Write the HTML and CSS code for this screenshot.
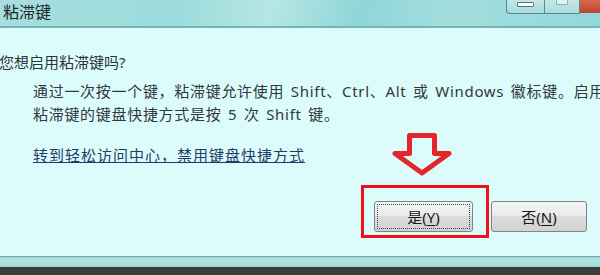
FILE: index.html
```html
<!DOCTYPE html>
<html lang="zh-CN">
<head>
    <meta charset="UTF-8">
    <title>粘滞键</title>
    <link rel="stylesheet" href="styles.css">
</head>
<body>

<div class="window">
    <div class="titlebar">
        <span class="title">粘滞键</span>
        <div class="caption-btns">
            <span class="cap cap-min"><i></i></span>
            <span class="cap cap-max"><i></i></span>
            <span class="cap cap-close"></span>
        </div>
    </div>

    <div class="content">
        <div class="question">您想启用粘滞键吗?</div>
        <p class="desc">通过一次按一个键，粘滞键允许使用 Shift、Ctrl、Alt 或 Windows 徽标键。启用<br>粘滞键的键盘快捷方式是按 5 次 Shift 键。</p>
        <a class="link" href="#">转到轻松访问中心，禁用键盘快捷方式</a>

        <div class="actions">
            <span class="highlight">
                <svg class="arrow" width="68" height="54" viewBox="0 0 68 54">
                    <path d="M21.5 9.5 H46.5 V27.5 H61 L34 47 L7 27.5 H21.5 Z" fill="none" stroke="#e3262b" stroke-width="5" stroke-linejoin="round"/>
                </svg>
                <button class="btn btn-focus"><span>是(<u>Y</u>)</span></button>
            </span>
            <button class="btn btn-no"><span>否(<u>N</u>)</span></button>
        </div>
    </div>

    <div class="footer"></div>
    <div class="taskbar"></div>
</div>

</body>
</html>
```

FILE: styles.css
```css
body {
    margin: 0;
    width: 600px;
    height: 275px;
    overflow: hidden;
    font-family: "Noto Sans", "Noto Sans CJK SC", sans-serif;
}
.window {
    display: flex;
    flex-direction: column;
    height: 275px;
}
.titlebar {
    display: flex;
    height: 26px;
    border-bottom: 2px solid #74b6b8;
    background: linear-gradient(100deg, #a6dfdf 0%, #9cdcdc 30%, #b6e6e4 45%, #8fd6d8 60%, #a3dedd 75%, #92d8da 100%);
}
.title {
    padding: 2px 0 0 3px;
    font-size: 16px;
    line-height: 20px;
    color: #1e2626;
}
.caption-btns {
    display: flex;
    margin-left: auto;
    height: 14px;
}
.cap {
    display: flex;
    justify-content: center;
    height: 13px;
    border: 1px solid #5d8689;
    border-top: none;
    border-left: none;
    background: linear-gradient(#c4e8e8, #a9dcdc);
}
.cap-min {
    width: 37px;
    border-left: 1px solid #5d8689;
    border-bottom-left-radius: 4px;
}
.cap-min i {
    width: 15px;
    height: 3px;
    margin-top: 2px;
    border: 1px solid #567578;
    background: #fff;
    border-radius: 1px;
}
.cap-max {
    width: 34px;
}
.cap-max i {
    width: 10px;
    height: 4px;
    border: 1px solid #8fb3b5;
    border-top: none;
    background: #dff3f3;
}
.cap-close {
    width: 20px;
    border: none;
    background: linear-gradient(#d86a52, #c0442f);
}
.content {
    height: 228px;
    background: #dcfcfc;
}
.question {
    margin-top: 24px;
    margin-left: -1px;
    font-size: 15px;
    line-height: 20px;
    color: #2b3434;
}
.desc {
    margin: 8px 0 0 33px;
    font-size: 15px;
    line-height: 23px;
    letter-spacing: 0.7px;
    word-spacing: 2px;
    color: #303838;
    white-space: nowrap;
}
.link {
    display: inline-block;
    margin: 18px 0 0 33px;
    font-size: 15px;
    line-height: 23px;
    letter-spacing: 1px;
    color: #1c3c66;
}
.actions {
    display: flex;
    justify-content: flex-end;
    align-items: flex-start;
    padding-right: 13px;
    margin-top: 18px;
}
.highlight {
    position: relative;
    padding: 13px 13px 3px 10px;
    border: 3px solid #ee1119;
}
.arrow {
    position: absolute;
    left: 24px;
    top: -62px;
}
.btn {
    display: flex;
    align-items: center;
    justify-content: center;
    height: 31px;
    padding: 0;
    border: 1px solid #7b8586;
    border-radius: 3px;
    background: linear-gradient(#f4f4f4 0%, #ebebeb 45%, #dddddd 50%, #d2d2d2 100%);
    font-family: "Noto Sans", "Noto Sans CJK SC", sans-serif;
    font-size: 15px;
    color: #161616;
}
.btn u {
    text-decoration-thickness: 1px;
    text-underline-offset: 2px;
}
.btn-focus {
    width: 99px;
}
.btn-focus span {
    display: flex;
    align-items: center;
    justify-content: center;
    width: 91px;
    height: 23px;
    border: 1px dotted #444;
}
.btn-no {
    width: 96px;
    margin: 16px 0 0 2px;
}
.footer {
    height: 10px;
    border-top: 1px solid #6aa8aa;
    background: linear-gradient(#9fd9d9 0%, #b4e6e4 35%, #98d6d6 100%);
}
.taskbar {
    flex: 1;
    background: #3b3b3b;
}
```
